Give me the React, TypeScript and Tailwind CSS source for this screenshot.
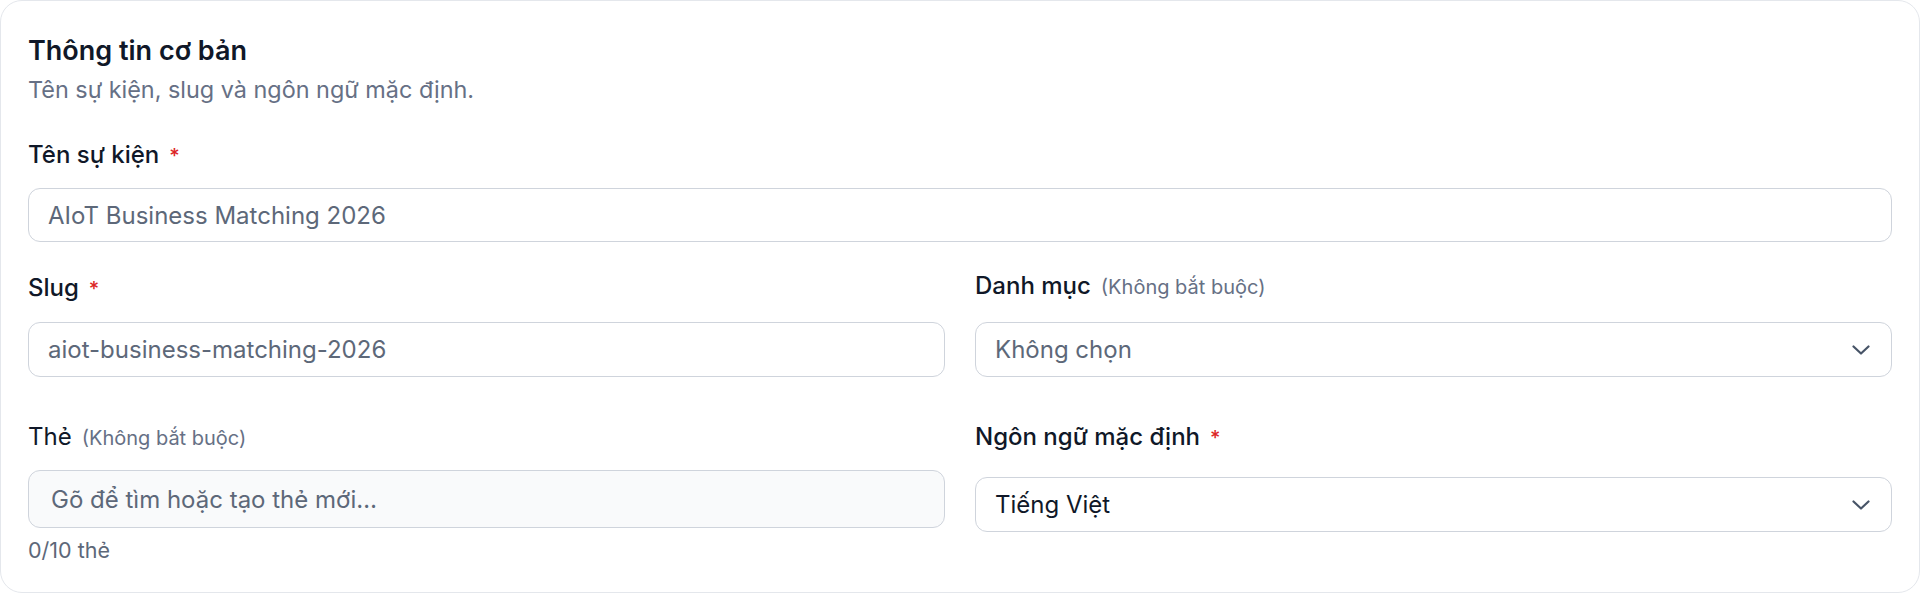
import type { ReactNode } from "react";

function Req() {
  return <span className="ml-[10px] text-[20px] leading-none font-medium text-[#dc2626]">*</span>;
}

function Optional() {
  return <span className="ml-[10px] text-[20px] leading-none font-normal text-[#667085]">(Không bắt buộc)</span>;
}

function Chevron() {
  return (
    <svg width="18" height="10" viewBox="0 0 18 10" fill="none" className="shrink-0">
      <polyline
        points="1.5,1.5 9,8.5 16.5,1.5"
        stroke="#475467"
        strokeWidth="2.2"
        strokeLinecap="round"
        strokeLinejoin="round"
      />
    </svg>
  );
}

function SelectBox({ children, dark }: { children: ReactNode; dark?: boolean }) {
  return (
    <button
      type="button"
      className={
        "flex h-[55px] w-full items-center justify-between rounded-[12px] border border-[#cfd4dc] bg-white pl-[19px] pr-[21px] text-left text-[24px] " +
        (dark ? "text-[#101828]" : "text-[#5d6879]")
      }
    >
      <span>{children}</span>
      <Chevron />
    </button>
  );
}

const inputCls =
  "block w-full rounded-[12px] border border-[#cfd4dc] bg-white px-[19px] text-[24px] text-[#5d6879] outline-none";

export default function App() {
  return (
    <div className="min-h-[593px] bg-white font-['Inter',sans-serif]">
      <section className="h-[593px] rounded-[22px] border border-[#e4e7ec] bg-white px-[27px] pt-[33px]">
        <h2 className="text-[27px] leading-[34px] font-semibold text-[#101828]">Thông tin cơ bản</h2>
        <p className="mt-[7px] text-[23.4px] leading-[30px] text-[#667085]">Tên sự kiện, slug và ngôn ngữ mặc định.</p>

        <div className="mt-[34px]">
          <label className="block text-[24px] leading-[32px] font-medium text-[#101828]">
            Tên sự kiện
            <Req />
          </label>
          <input readOnly defaultValue="AIoT Business Matching 2026" className={"mt-[17px] h-[54px] " + inputCls} />
        </div>

        <div className="mt-[30px] grid grid-cols-2 gap-x-[30px]">
          <div>
            <label className="block text-[24px] leading-[32px] font-medium text-[#101828]">
              Slug
              <Req />
            </label>
            <input readOnly defaultValue="aiot-business-matching-2026" className={"mt-[18px] h-[55px] " + inputCls} />
          </div>
          <div>
            <label className="block text-[24px] leading-[28px] font-medium text-[#101828]">
              Danh mục
              <Optional />
            </label>
            <div className="mt-[22px]">
              <SelectBox>Không chọn</SelectBox>
            </div>
          </div>
        </div>

        <div className="mt-[44px] grid grid-cols-2 items-start gap-x-[30px]">
          <div>
            <label className="block text-[24px] leading-[32px] font-normal text-[#101828]">
              Thẻ
              <Optional />
            </label>
            <input
              readOnly
              placeholder="Gõ để tìm hoặc tạo thẻ mới…"
              className="mt-[17px] block h-[58px] w-full rounded-[12px] border border-[#cfd4dc] bg-[#f9fafb] px-[22px] text-[24px] text-[#5d6879] outline-none placeholder:text-[#5d6879]"
            />
            <p className="mt-[7px] text-[21.5px] leading-[30px] text-[#5d6879]">0/10 thẻ</p>
          </div>
          <div>
            <label className="block text-[24px] leading-[32px] font-medium text-[#101828]">
              Ngôn ngữ mặc định
              <Req />
            </label>
            <div className="mt-[24px]">
              <SelectBox dark>Tiếng Việt</SelectBox>
            </div>
          </div>
        </div>
      </section>
    </div>
  );
}
